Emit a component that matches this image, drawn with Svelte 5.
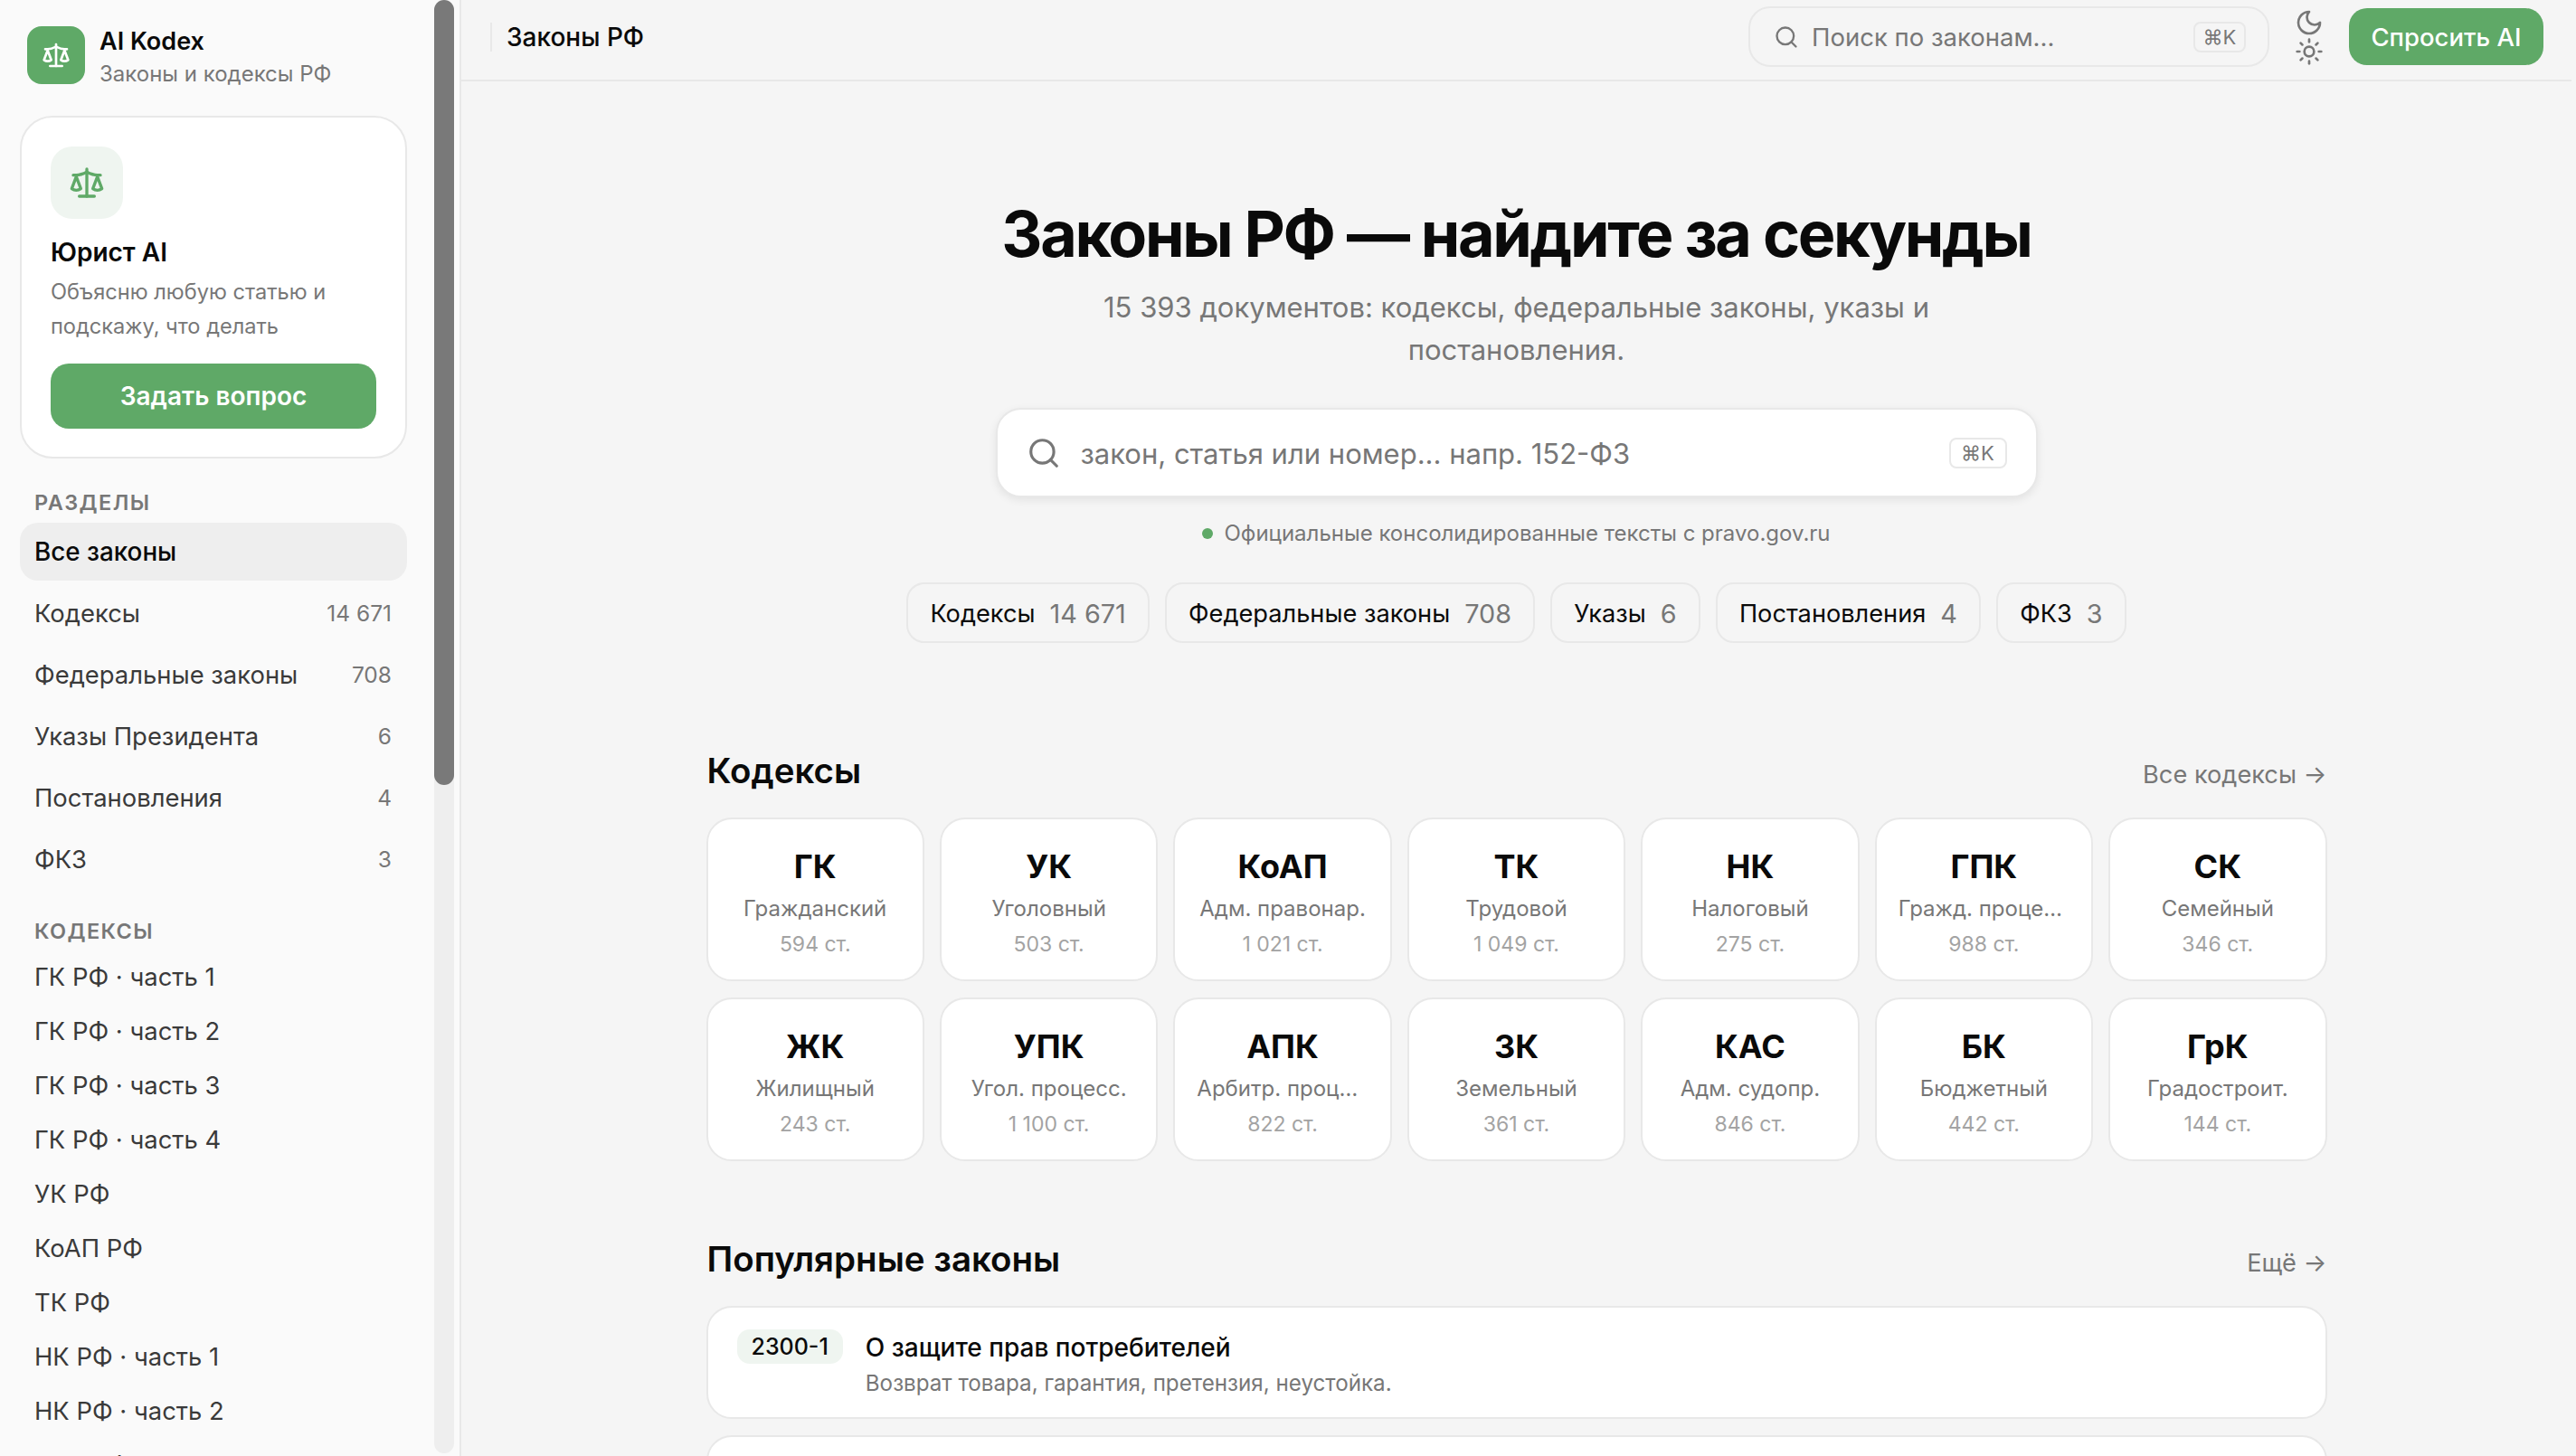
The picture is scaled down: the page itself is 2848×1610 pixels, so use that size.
<script>
  const sections = [
    { name: 'Кодексы', count: '14 671' },
    { name: 'Федеральные законы', count: '708' },
    { name: 'Указы Президента', count: '6' },
    { name: 'Постановления', count: '4' },
    { name: 'ФКЗ', count: '3' }
  ];

  const sideCodes = [
    'ГК РФ · часть 1', 'ГК РФ · часть 2', 'ГК РФ · часть 3', 'ГК РФ · часть 4',
    'УК РФ', 'КоАП РФ', 'ТК РФ', 'НК РФ · часть 1', 'НК РФ · часть 2', 'АПК РФ'
  ];

  const chips = [
    { name: 'Кодексы', count: '14 671' },
    { name: 'Федеральные законы', count: '708' },
    { name: 'Указы', count: '6' },
    { name: 'Постановления', count: '4' },
    { name: 'ФКЗ', count: '3' }
  ];

  const codes = [
    { code: 'ГК', name: 'Гражданский', count: '594 ст.' },
    { code: 'УК', name: 'Уголовный', count: '503 ст.' },
    { code: 'КоАП', name: 'Адм. правонар.', count: '1 021 ст.' },
    { code: 'ТК', name: 'Трудовой', count: '1 049 ст.' },
    { code: 'НК', name: 'Налоговый', count: '275 ст.' },
    { code: 'ГПК', name: 'Гражд. процессуальный', count: '988 ст.' },
    { code: 'СК', name: 'Семейный', count: '346 ст.' },
    { code: 'ЖК', name: 'Жилищный', count: '243 ст.' },
    { code: 'УПК', name: 'Угол. процесс.', count: '1 100 ст.' },
    { code: 'АПК', name: 'Арбитр. процессуальный', count: '822 ст.' },
    { code: 'ЗК', name: 'Земельный', count: '361 ст.' },
    { code: 'КАС', name: 'Адм. судопр.', count: '846 ст.' },
    { code: 'БК', name: 'Бюджетный', count: '442 ст.' },
    { code: 'ГрК', name: 'Градостроит.', count: '144 ст.' }
  ];

  const laws = [
    { num: '2300-1', title: 'О защите прав потребителей', desc: 'Возврат товара, гарантия, претензия, неустойка.' },
    { num: '152-ФЗ', title: 'О персональных данных', desc: 'Согласие, обработка, хранение данных.' }
  ];
</script>

{#snippet scales(size)}
  <svg width={size} height={size} viewBox="0 0 24 24" fill="none" stroke="currentColor" stroke-width="2" stroke-linecap="round" stroke-linejoin="round">
    <path d="m16 16 3-8 3 8c-.87.65-1.92 1-3 1s-2.13-.35-3-1Z" />
    <path d="m2 16 3-8 3 8c-.87.65-1.92 1-3 1s-2.13-.35-3-1Z" />
    <path d="M7 21h10" />
    <path d="M12 3v18" />
    <path d="M3 7h2c2 0 5-1 7-2 2 1 5 2 7 2h2" />
  </svg>
{/snippet}

{#snippet searchIcon(size)}
  <svg width={size} height={size} viewBox="0 0 24 24" fill="none" stroke="currentColor" stroke-width="2" stroke-linecap="round" stroke-linejoin="round">
    <circle cx="11" cy="11" r="8" />
    <path d="m21 21-4.3-4.3" />
  </svg>
{/snippet}

<div class="shell">
  <aside class="sidebar">
    <div class="side-content">
      <div class="brand">
        <div class="logo">{@render scales(32)}</div>
        <div class="brand-text">
          <div class="brand-name">AI Kodex</div>
          <div class="brand-sub">Законы и кодексы РФ</div>
        </div>
      </div>

      <div class="ai-card">
        <div class="ai-icon">{@render scales(40)}</div>
        <div class="ai-title">Юрист AI</div>
        <div class="ai-desc">Объясню любую статью и подскажу, что делать</div>
        <button class="ai-btn">Задать вопрос</button>
      </div>

      <div class="side-label first">Разделы</div>
      <nav class="side-nav">
        <div class="nav-item active">Все законы</div>
        {#each sections as s}
          <div class="nav-item"><span>{s.name}</span><span class="nav-count">{s.count}</span></div>
        {/each}
      </nav>

      <div class="side-label second">Кодексы</div>
      <nav class="code-nav">
        {#each sideCodes as c}
          <div class="code-item">{c}</div>
        {/each}
      </nav>
    </div>
    <div class="scroll-track"><div class="scroll-thumb"></div></div>
  </aside>

  <main class="main">
    <header class="topbar">
      <div class="crumb">Законы РФ</div>
      <div class="top-search">
        {@render searchIcon(28)}
        <span class="top-placeholder">Поиск по законам...</span>
        <kbd class="top-kbd">⌘K</kbd>
      </div>
      <div class="theme">
        <svg width="32" height="32" viewBox="0 0 24 24" fill="none" stroke="currentColor" stroke-width="2" stroke-linecap="round" stroke-linejoin="round">
          <path d="M12 3a6 6 0 0 0 9 9 9 9 0 1 1-9-9Z" />
        </svg>
        <svg width="32" height="32" viewBox="0 0 24 24" fill="none" stroke="currentColor" stroke-width="2" stroke-linecap="round" stroke-linejoin="round">
          <circle cx="12" cy="12" r="4" />
          <path d="M12 2v2" /><path d="M12 20v2" />
          <path d="m4.93 4.93 1.41 1.41" /><path d="m17.66 17.66 1.41 1.41" />
          <path d="M2 12h2" /><path d="M20 12h2" />
          <path d="m6.34 17.66-1.41 1.41" /><path d="m19.07 4.93-1.41 1.41" />
        </svg>
      </div>
      <button class="ask-btn">Спросить AI</button>
    </header>

    <div class="page">
      <section class="hero">
        <h1>Законы РФ — найдите за секунды</h1>
        <p class="hero-sub">15 393 документов: кодексы, федеральные законы, указы и постановления.</p>
        <div class="hero-search">
          {@render searchIcon(38)}
          <span class="hero-placeholder">закон, статья или номер... напр. 152-ФЗ</span>
          <kbd class="hero-kbd">⌘K</kbd>
        </div>
        <div class="source"><i class="dot"></i>Официальные консолидированные тексты с pravo.gov.ru</div>
        <div class="chips">
          {#each chips as c}
            <div class="chip">{c.name}<span class="chip-count">{c.count}</span></div>
          {/each}
        </div>
      </section>

      <div class="sec-head codes-head">
        <h2>Кодексы</h2>
        <a class="sec-link" href="#codes">Все кодексы →</a>
      </div>
      <div class="code-grid">
        {#each codes as c}
          <div class="code-card">
            <div class="cc-code">{c.code}</div>
            <div class="cc-name">{c.name}</div>
            <div class="cc-count">{c.count}</div>
          </div>
        {/each}
      </div>

      <div class="sec-head laws-head">
        <h2>Популярные законы</h2>
        <a class="sec-link" href="#laws">Ещё →</a>
      </div>
      <div class="law-list">
        {#each laws as l}
          <div class="law">
            <span class="law-num">{l.num}</span>
            <div>
              <div class="law-title">{l.title}</div>
              <div class="law-desc">{l.desc}</div>
            </div>
          </div>
        {/each}
      </div>
    </div>
  </main>
</div>

<style>
  :global(body) {
    margin: 0;
    background: #f5f5f5;
    font-family: Inter, "Noto Sans", sans-serif;
    color: #0a0a0a;
  }
  .shell {
    display: flex;
    width: 2848px;
    height: 1610px;
    overflow: hidden;
    box-sizing: border-box;
    padding-right: 5px;
  }

  /* sidebar */
  .sidebar {
    flex: 0 0 510px;
    box-sizing: border-box;
    display: flex;
    height: 1610px;
    overflow: hidden;
    background: #fafafa;
    border-right: 2px solid #e8e8e8;
    padding-right: 6px;
  }
  .side-content {
    width: 480px;
    flex: none;
    box-sizing: border-box;
    padding: 29px 30px 0 22px;
  }
  .scroll-track {
    width: 22px;
    height: 1607px;
    flex: none;
    background: #eeeeee;
    border-radius: 11px;
  }
  .scroll-thumb {
    height: 868px;
    background: #797979;
    border-radius: 11px;
  }
  .brand {
    display: flex;
    align-items: center;
    gap: 16px;
    padding-left: 8px;
    height: 64px;
  }
  .logo {
    width: 64px;
    height: 64px;
    flex: none;
    border-radius: 16px;
    background: #5fa967;
    color: #fff;
    display: flex;
    align-items: center;
    justify-content: center;
  }
  .brand-text {
    padding-top: 5px;
  }
  .brand-name {
    font-size: 27px;
    font-weight: 600;
    line-height: 34px;
  }
  .brand-sub {
    margin-top: 2px;
    font-size: 24px;
    line-height: 34px;
    color: #777;
  }
  .ai-card {
    margin-top: 35px;
    box-sizing: border-box;
    height: 379px;
    padding: 32px;
    background: #fff;
    border: 2px solid #e8e8e8;
    border-radius: 36px;
  }
  .ai-icon {
    width: 80px;
    height: 80px;
    border-radius: 24px;
    background: #eff5f0;
    color: #5fa967;
    display: flex;
    align-items: center;
    justify-content: center;
  }
  .ai-title {
    margin-top: 18px;
    font-size: 28px;
    font-weight: 600;
    line-height: 38px;
  }
  .ai-desc {
    margin-top: 6px;
    font-size: 23.6px;
    line-height: 38px;
    color: #777;
  }
  .ai-btn {
    display: block;
    width: 100%;
    height: 72px;
    margin-top: 22px;
    border: none;
    border-radius: 20px;
    background: #5fa967;
    color: #fff;
    font: 600 28px Inter, sans-serif;
  }
  .side-label {
    padding-left: 16px;
    font-size: 23.5px;
    font-weight: 600;
    line-height: 30px;
    letter-spacing: 0.06em;
    text-transform: uppercase;
    color: #777;
  }
  .side-label.first {
    margin-top: 34px;
    margin-bottom: 7px;
  }
  .side-label.second {
    margin-top: 33px;
    margin-bottom: 5px;
  }
  .side-nav {
    display: flex;
    flex-direction: column;
    gap: 4px;
  }
  .nav-item {
    display: flex;
    justify-content: space-between;
    align-items: center;
    height: 64px;
    padding: 0 17px 0 16px;
    font-size: 27.4px;
    color: #3a3a3a;
    border-radius: 20px;
  }
  .nav-item.active {
    background: #eeeeee;
    color: #0a0a0a;
    font-size: 27.8px;
    font-weight: 500;
  }
  .nav-count {
    font-size: 24.5px;
    color: #777;
  }
  .code-item {
    display: flex;
    align-items: center;
    height: 60px;
    padding: 0 16px;
    font-size: 27.4px;
    color: #3a3a3a;
  }

  /* main */
  .main {
    flex: 1;
    min-width: 0;
    background: #f5f5f5;
  }
  .topbar {
    box-sizing: border-box;
    height: 90px;
    display: flex;
    align-items: center;
    padding: 0 31px 7px 32px;
    border-bottom: 2px solid #e8e8e8;
  }
  .crumb {
    border-left: 2px solid #e8e8e8;
    height: 32px;
    line-height: 32px;
    padding-left: 16px;
    font-size: 28px;
    font-weight: 500;
  }
  .top-search {
    margin-left: auto;
    box-sizing: border-box;
    width: 576px;
    height: 67px;
    display: flex;
    align-items: center;
    gap: 14px;
    padding: 0 24px 0 26px;
    border: 2px solid #e8e8e8;
    border-radius: 24px;
    color: #777;
  }
  .top-placeholder {
    flex: 1;
    font-size: 27.5px;
    color: #777;
  }
  kbd {
    font-family: Inter, "DejaVu Sans", sans-serif;
    box-sizing: border-box;
    display: flex;
    align-items: center;
    justify-content: center;
    border: 2px solid #e8e8e8;
    border-radius: 8px;
    color: #777;
  }
  .top-kbd {
    width: 58px;
    height: 34px;
    font-size: 22px;
  }
  .theme {
    display: flex;
    flex-direction: column;
    margin: 0 28px 0 28px;
    color: #777;
  }
  .theme svg {
    display: block;
  }
  .ask-btn {
    width: 215px;
    height: 63px;
    border: none;
    border-radius: 20px;
    background: #5fa967;
    color: #fff;
    font: 500 27.5px Inter, sans-serif;
  }
  .page {
    width: 1792px;
    margin: 0 auto;
  }
  .hero {
    display: flex;
    flex-direction: column;
    align-items: center;
    padding-top: 126px;
  }
  h1 {
    margin: 0;
    font-size: 70px;
    line-height: 86px;
    font-weight: 700;
    letter-spacing: -2.35px;
    white-space: nowrap;
  }
  .hero-sub {
    width: 960px;
    margin: 14px 0 0;
    text-align: center;
    font-size: 31px;
    line-height: 47px;
    color: #777;
  }
  .hero-search {
    box-sizing: border-box;
    width: 1152px;
    height: 99px;
    margin-top: 41px;
    display: flex;
    align-items: center;
    gap: 22px;
    padding: 0 32px 0 32px;
    background: #fff;
    border: 2px solid #e8e8e8;
    border-radius: 28px;
    box-shadow: 0 3px 10px rgba(0, 0, 0, 0.08);
    color: #777;
  }
  .hero-placeholder {
    flex: 1;
    font-size: 31px;
    padding-top: 2px;
    color: #777;
  }
  .hero-kbd {
    width: 64px;
    height: 34px;
    font-size: 22px;
  }
  .source {
    display: flex;
    align-items: center;
    gap: 12px;
    margin-top: 24px;
    font-size: 24px;
    line-height: 32px;
    color: #777;
  }
  .dot {
    width: 12px;
    height: 12px;
    border-radius: 50%;
    background: #5fa967;
  }
  .chips {
    display: flex;
    gap: 16.5px;
    margin-top: 38px;
  }
  .chip {
    box-sizing: border-box;
    height: 67px;
    display: flex;
    align-items: center;
    gap: 16px;
    padding: 1px 24.4px 0;
    border: 2px solid #e8e8e8;
    border-radius: 20px;
    font-size: 27.2px;
    font-weight: 400;
  }
  .chip-count {
    color: #777;
    font-size: 28.8px;
  }
  .sec-head {
    display: flex;
    justify-content: space-between;
    align-items: center;
    height: 50px;
  }
  .codes-head {
    margin-top: 116px;
  }
  .laws-head {
    margin-top: 83px;
  }
  h2 {
    margin: 0 0 0 1px;
    font-size: 38.5px;
    font-weight: 600;
  }
  .sec-link {
    font-size: 27.2px;
    color: #777;
    text-decoration: none;
    padding-top: 8px;
  }
  .code-grid {
    display: grid;
    grid-template-columns: repeat(7, 1fr);
    gap: 18px 17px;
    margin-top: 27px;
  }
  .code-card {
    box-sizing: border-box;
    min-width: 0;
    height: 181px;
    padding: 27px 24px 0;
    background: #fff;
    border: 2px solid #e8e8e8;
    border-radius: 28px;
    text-align: center;
  }
  .cc-code {
    font-size: 36px;
    font-weight: 700;
    line-height: 50px;
  }
  .cc-name {
    margin-top: 5px;
    font-size: 24px;
    line-height: 34px;
    color: #777;
    white-space: nowrap;
    overflow: hidden;
    text-overflow: ellipsis;
  }
  .cc-count {
    margin-top: 6px;
    font-size: 23px;
    line-height: 32px;
    color: #a3a3a3;
  }
  .law-list {
    display: flex;
    flex-direction: column;
    gap: 18px;
    margin-top: 27px;
  }
  .law {
    box-sizing: border-box;
    height: 125px;
    display: flex;
    align-items: flex-start;
    gap: 25px;
    padding: 24px 32px;
    background: #fff;
    border: 2px solid #e8e8e8;
    border-radius: 28px;
  }
  .law-num {
    box-sizing: border-box;
    height: 38px;
    line-height: 38px;
    padding: 0 16px;
    border-radius: 14px;
    background: #eff5f0;
    font-size: 25px;
    font-weight: 500;
  }
  .law-title {
    font-size: 28px;
    font-weight: 500;
    line-height: 40px;
  }
  .law-desc {
    margin-top: 3px;
    font-size: 24.2px;
    line-height: 34px;
    color: #777;
  }
</style>
